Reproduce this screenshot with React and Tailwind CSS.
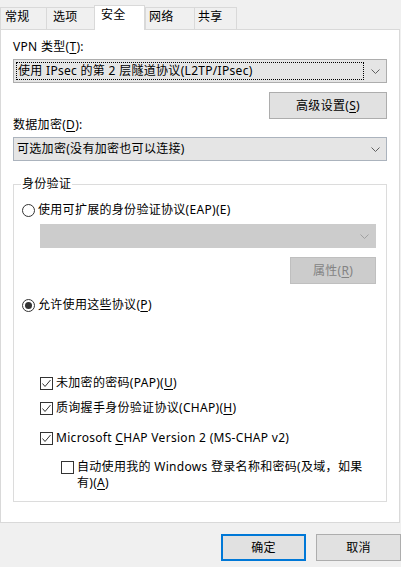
import React from 'react';

const Chevron = ({ color = '#606060' }) => (
  <svg width="9" height="5" viewBox="0 0 9 5" fill="none" stroke={color} strokeWidth="1">
    <path d="M0.5 0.5L4.5 4.5L8.5 0.5" />
  </svg>
);

const Radio = ({ on }) => (
  <span className="flex h-[13px] w-[13px] shrink-0 items-center justify-center rounded-full border border-[#333] bg-white">
    {on && <span className="h-[7px] w-[7px] rounded-full bg-[#333]" />}
  </span>
);

const Check = ({ on }) => (
  <span className="flex h-[13px] w-[13px] shrink-0 items-center justify-center border border-[#333] bg-white">
    {on && (
      <svg width="11" height="11" viewBox="0 0 11 11" fill="none" stroke="#333" strokeWidth="1">
        <path d="M1.5 5.5L4 8.5L9.5 2" />
      </svg>
    )}
  </span>
);

const U = ({ children }) => <span className="underline underline-offset-2">{children}</span>;

export default function App() {
  const tabs = [
    { t: '常规', cls: 'w-[46px] pl-[4px]' },
    { t: '选项', cls: 'w-[48px] pl-[6px]' },
    { t: '安全', cls: 'w-[51px] pl-[6px]', active: true },
    { t: '网络', cls: 'w-[49px] pl-[3px]' },
    { t: '共享', cls: 'w-[43px] pl-[3px] border-r' },
  ];

  return (
    <div className="h-[567px] w-[401px] overflow-hidden bg-[#f0f0f0] text-[12px] leading-4 tracking-[0.3px] text-black font-[family-name:Noto_Sans,Noto_Sans_CJK_SC,sans-serif]">
      {/* tabs */}
      <div className="flex h-[29px] items-end">
        {tabs.map((tab) =>
          tab.active ? (
            <div key={tab.t} className={`relative z-10 -mb-px h-[25px] border-x border-t border-[#d9d9d9] bg-white pt-px ${tab.cls}`}>
              {tab.t}
            </div>
          ) : (
            <div key={tab.t} className={`h-[22px] border-l border-t border-[#d9d9d9] pt-px ${tab.cls}`}>
              {tab.t}
            </div>
          )
        )}
      </div>

      {/* panel */}
      <div className="h-[494px] w-[400px] border border-[#d9d9d9] bg-white px-3 pt-[9px]">
        <div>VPN 类型(<U>T</U>):</div>
        <div className="mt-1 flex h-[24px] items-center border border-[#adadad] bg-[#e5e5e5] pl-[2px] pr-[6px]">
          <div className="flex h-[18px] flex-1 items-center border border-dotted border-black pl-[1px]">
            使用 IPsec 的第 2 层隧道协议(L2TP/IPsec)
          </div>
          <div className="ml-[7px] flex w-[9px] items-center">
            <Chevron />
          </div>
        </div>

        <div className="mt-[9px] flex justify-end">
          <div className="flex h-[27px] w-[118px] items-center justify-center border border-[#adadad] bg-[#e1e1e1]">
            高级设置(<U>S</U>)
          </div>
        </div>

        <div className="-mt-[2px]">数据加密(<U>D</U>):</div>
        <div className="mt-1 flex h-[24px] items-center justify-between border border-[#abb3bd] bg-[#e5e5e5] pl-[3px] pr-[6px]">
          <span>可选加密(没有加密也可以连接)</span>
          <Chevron />
        </div>

        {/* group box */}
        <div className="relative mt-[23px] h-[318px] border border-[#dcdcdc]">
          <span className="absolute -top-[9px] left-[7px] bg-white px-px">身份验证</span>

          <div className="mt-[17px] flex items-center gap-[3px] pl-2">
            <Radio />
            <span>使用可扩展的身份验证协议(EAP)(E)</span>
          </div>

          <div className="ml-[26px] mr-[10px] mt-[6px] flex h-[24px] items-center justify-end border border-[#cccccc] bg-[#cccccc] pr-[6px]">
            <Chevron color="#a0a0a0" />
          </div>

          <div className="mr-[10px] mt-[9px] flex justify-end">
            <div className="flex h-[27px] w-[86px] items-center justify-center border border-[#bfbfbf] bg-[#cccccc] text-[#838383]">
              属性(<U>R</U>)
            </div>
          </div>

          <div className="mt-[13px] flex items-center gap-[3px] pl-2">
            <Radio on />
            <span>允许使用这些协议(<U>P</U>)</span>
          </div>

          <div className="ml-[26px] mt-[62px] flex items-center gap-[3px]">
            <Check on />
            <span>未加密的密码(PAP)(<U>U</U>)</span>
          </div>
          <div className="ml-[26px] mt-[9px] flex items-center gap-[3px]">
            <Check on />
            <span>质询握手身份验证协议(CHAP)(<U>H</U>)</span>
          </div>
          <div className="ml-[26px] mt-[14px] flex items-center gap-[3px]">
            <Check on />
            <span>Microsoft <U>C</U>HAP Version 2 (MS-CHAP v2)</span>
          </div>
          <div className="ml-[47px] mt-[13px] flex items-start gap-[3px]">
            <span className="mt-[2px]">
              <Check />
            </span>
            <span>
              自动使用我的 Windows 登录名称和密码(及域，如果
              <br />
              有)(<U>A</U>)
            </span>
          </div>
        </div>
      </div>

      {/* dialog buttons */}
      <div className="mt-[11px] flex justify-end gap-[10px]">
        <div className="flex h-[27px] w-[85px] items-center justify-center border-2 border-[#0078d7] bg-[#e1e1e1]">确定</div>
        <div className="flex h-[27px] w-[85px] items-center justify-center border border-[#adadad] bg-[#e1e1e1]">取消</div>
      </div>
    </div>
  );
}
